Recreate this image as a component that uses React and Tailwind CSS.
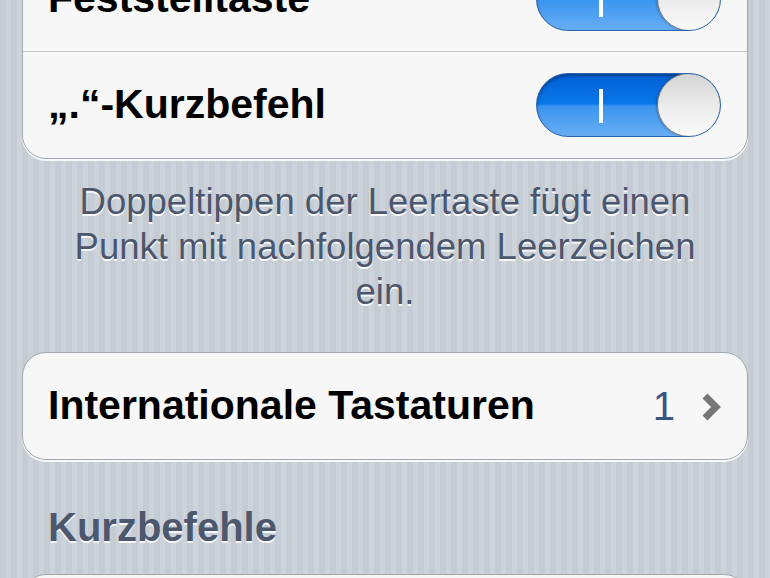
// App.jsx
// iOS-style keyboard settings screen (grouped table view on striped background)

function Toggle() {
  return (
    <div className="relative h-[64px] w-[185px] shrink-0 overflow-hidden rounded-full border border-[#2a63ad] bg-[linear-gradient(180deg,#005fd4_0%,#0a78ea_48%,#3b95ef_52%,#68aef4_100%)] shadow-[inset_0_2px_3px_rgba(0,0,0,0.35)]">
      <div className="absolute left-[62px] top-[15px] h-[34px] w-[4px] bg-white" />
      <div className="absolute right-[-1px] top-[-1px] h-[64px] w-[64px] rounded-full border border-[#7d7d7d] bg-[linear-gradient(180deg,#d4d4d4_0%,#ececec_55%,#fbfbfb_100%)] shadow-[-1px_0_2px_rgba(0,0,0,0.25)]" />
    </div>
  );
}

function Card({ children, className = "" }) {
  return (
    <div
      className={
        "overflow-hidden rounded-[24px] border border-[#a3a8af] bg-[#f7f7f7] shadow-[0_2px_0_rgba(255,255,255,0.85)] " +
        className
      }
    >
      {children}
    </div>
  );
}

export default function App() {
  return (
    <div className="h-[578px] w-[770px] overflow-hidden bg-[repeating-linear-gradient(90deg,#c5ccd4_0px,#c5ccd4_6px,#ccd3da_6px,#ccd3da_11px)] font-['Liberation_Sans',Arial,sans-serif]">
      <div className="px-[22px]">
        {/* Toggles */}
        <Card className="mt-[-54px]">
          <div className="flex h-[105px] items-center justify-between border-b border-[#c9c9c9] pl-[25px] pr-[26px]">
            <span className="text-[41px] font-bold text-black">Feststelltaste</span>
            <Toggle />
          </div>
          <div className="flex h-[106px] items-center justify-between pl-[25px] pr-[26px]">
            <span className="text-[41px] font-bold text-black">„.“-Kurzbefehl</span>
            <Toggle />
          </div>
        </Card>

        <p className="mt-[20px] px-[28px] text-center text-[36.5px] leading-[45px] text-[#4c566c] [text-shadow:0_2px_0_rgba(255,255,255,0.9)]">
          Doppeltippen der Leertaste fügt einen Punkt mit nachfolgendem Leerzeichen ein.
        </p>

        {/* International keyboards */}
        <Card className="mt-[38px]">
          <div className="flex h-[106px] items-center justify-between pl-[25px] pr-[26px]">
            <span className="text-[41px] font-bold text-black">Internationale Tastaturen</span>
            <div className="flex items-center gap-[26px]">
              <span className="text-[40px] text-[#385487]">1</span>
              <svg width="20" height="28" viewBox="0 0 20 28" className="mt-[2px]">
                <polyline
                  points="4,3 15,14 4,25"
                  fill="none"
                  stroke="#777777"
                  strokeWidth="7"
                  strokeLinejoin="miter"
                />
              </svg>
            </div>
          </div>
        </Card>

        <h2 className="mt-[43px] pl-[26px] text-[40px] font-bold leading-[48px] text-[#4d586e] [text-shadow:0_2px_0_rgba(255,255,255,0.9)]">
          Kurzbefehle
        </h2>

        <Card className="mt-[23px] h-[100px]" />
      </div>
    </div>
  );
}
